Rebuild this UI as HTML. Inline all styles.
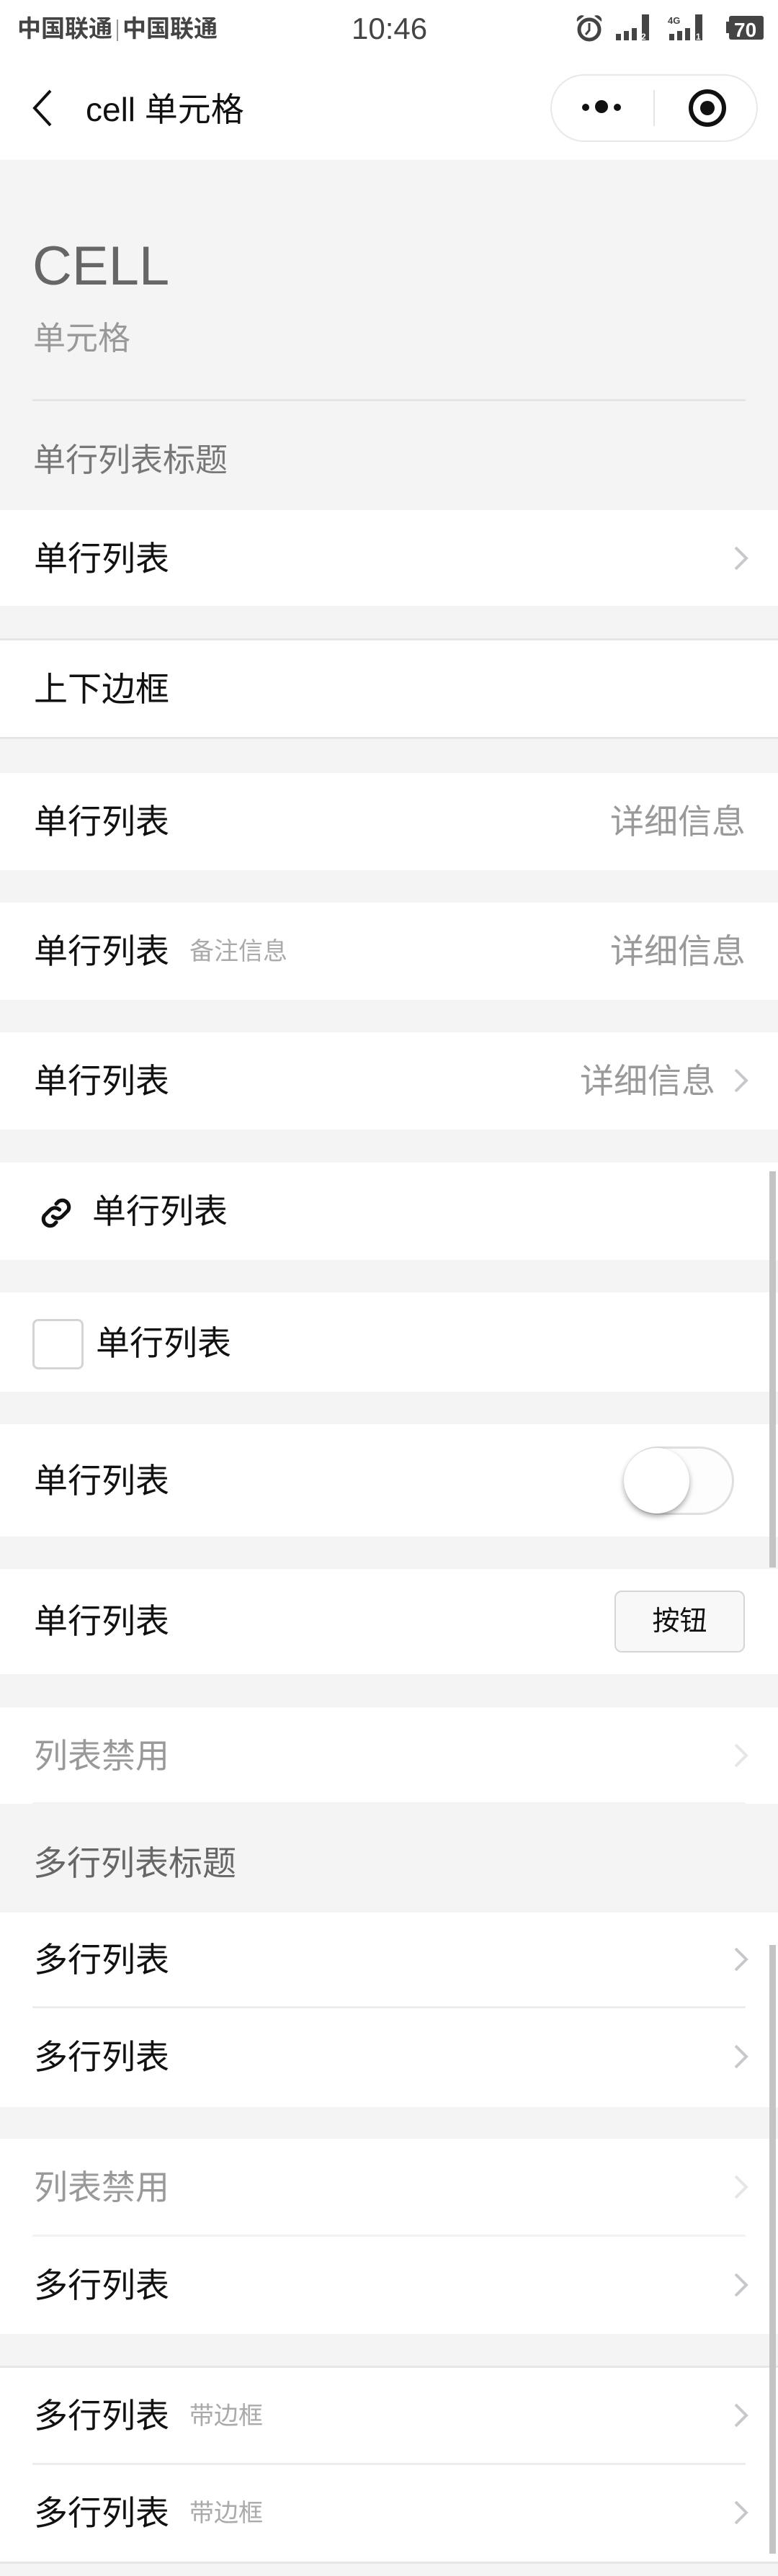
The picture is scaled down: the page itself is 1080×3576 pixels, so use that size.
<!DOCTYPE html>
<html><head><meta charset="utf-8"><style>
*{margin:0;padding:0;box-sizing:border-box}
body{width:1080px;height:3576px;background:#f4f4f4;position:relative;overflow:hidden;font-family:"Liberation Sans","Noto Sans CJK SC",sans-serif;color:#111}
.a{position:absolute}
.w{position:absolute;left:0;width:1080px;background:#fff}
.t{position:absolute;left:47px;font-size:47px;line-height:47px;white-space:nowrap}
.d{position:absolute;right:45px;font-size:47px;line-height:47px;color:#999}
.n{font-size:34px;color:#aaa;margin-left:28px;vertical-align:middle;position:relative;top:-3px}
.sep{position:absolute;left:45px;width:990px;height:3px;background:#ececec}
.bl{position:absolute;left:0;width:1080px;height:3px;background:#e6e6e6}
.ch{position:absolute;left:1016px;width:26px;height:40px}
</style></head><body>
<div class="w" style="top:0;height:222px"></div>
<div class="a" style="left:24px;top:22px;font-size:33px;font-weight:bold;color:#444;line-height:36px">中国联通<span style="display:inline-block;width:2px;height:30px;background:#999;margin:0 6px;vertical-align:middle"></span>中国联通</div>
<div class="a" style="left:488px;top:18px;font-size:42px;color:#444;line-height:44px">10:46</div>
<svg class="a" style="left:798px;top:18px" width="270" height="44" viewBox="798 18 270 44">
<circle cx="818" cy="41" r="14" fill="none" stroke="#444" stroke-width="5"/>
<path d="M818 32v10l-5 6" stroke="#444" stroke-width="3" fill="none"/>
<path d="M801 30a7 7 0 0 1 10-8zM835 30a7 7 0 0 0-10-8z" fill="#444"/>
<rect x="855" y="47" width="7" height="9" fill="#444"/><rect x="866" y="43" width="7" height="13" fill="#444"/><rect x="877" y="39" width="7" height="17" fill="#444"/><rect x="891" y="20" width="10" height="36" fill="#444"/>
<text x="890" y="55" font-size="12" fill="#fff" font-weight="bold" font-family="Liberation Sans">2</text>
<text x="927" y="33" font-size="13" fill="#444" font-weight="bold" font-family="Liberation Sans">4G</text>
<rect x="929" y="47" width="7" height="9" fill="#444"/><rect x="940" y="43" width="7" height="13" fill="#444"/><rect x="951" y="39" width="7" height="17" fill="#444"/><rect x="965" y="20" width="10" height="36" fill="#444"/>
<text x="966" y="55" font-size="12" fill="#fff" font-weight="bold" font-family="Liberation Sans">1</text>
<rect x="1008" y="30" width="5" height="16" fill="#444"/><rect x="1012" y="22" width="48" height="33" rx="3" fill="#444"/>
<text x="1019" y="51" font-size="28" fill="#fff" font-weight="bold" font-family="Liberation Sans">70</text>
</svg>
<svg class="a" style="left:40px;top:122px" width="36" height="56"><path d="M30 4L8 28l22 24" fill="none" stroke="#111" stroke-width="4"/></svg>
<div class="a" style="left:119px;top:128px;font-size:46px;line-height:48px;color:#111">cell 单元格</div>
<div class="a" style="left:764px;top:103px;width:288px;height:94px;border:2px solid #e8e8e8;border-radius:47px;background:#fff"></div>
<div class="a" style="left:907px;top:125px;width:2px;height:50px;background:#e5e5e5"></div>
<div class="a" style="left:808px;top:144px;width:10px;height:10px;border-radius:5px;background:#111"></div>
<div class="a" style="left:826px;top:139px;width:18px;height:18px;border-radius:9px;background:#111"></div>
<div class="a" style="left:852px;top:144px;width:10px;height:10px;border-radius:5px;background:#111"></div>
<div class="a" style="left:956px;top:124px;width:52px;height:52px;border-radius:26px;border:6px solid #111"></div>
<div class="a" style="left:972px;top:140px;width:20px;height:20px;border-radius:10px;background:#111"></div>
<div class="a" style="left:45px;top:330px;font-size:76px;line-height:80px;color:#666">CELL</div>
<div class="a" style="left:46px;top:447px;font-size:45px;line-height:46px;color:#999">单元格</div>
<div class="a" style="left:45px;top:554px;width:990px;height:3px;background:#e5e5e5"></div>
<div class="a" style="left:46px;top:616px;font-size:45px;line-height:46px;color:#777">单行列表标题</div>

<div class="w" style="top:708px;height:133px"></div>
<div class="t" style="top:752px">单行列表</div>
<svg class="ch" style="top:755px"><path d="M5 5l15 15-15 15" fill="none" stroke="#c7c7cc" stroke-width="4"/></svg>

<div class="w" style="top:886px;height:140px"></div>
<div class="bl" style="top:886px"></div><div class="bl" style="top:1023px"></div>
<div class="t" style="top:933px">上下边框</div>

<div class="w" style="top:1073px;height:135px"></div>
<div class="t" style="top:1117px">单行列表</div>
<div class="d" style="top:1117px">详细信息</div>

<div class="w" style="top:1253px;height:135px"></div>
<div class="t" style="top:1297px">单行列表<span class="n">备注信息</span></div>
<div class="d" style="top:1297px">详细信息</div>

<div class="w" style="top:1433px;height:135px"></div>
<div class="t" style="top:1477px">单行列表</div>
<div class="d" style="top:1477px;right:87px">详细信息</div>
<svg class="ch" style="top:1480px"><path d="M5 5l15 15-15 15" fill="none" stroke="#c7c7cc" stroke-width="4"/></svg>

<div class="w" style="top:1614px;height:135px"></div>
<svg class="a" style="left:50px;top:1656px" width="56" height="56" viewBox="0 0 24 24"><g fill="none" stroke="#111" stroke-width="2.2" stroke-linecap="round"><path d="M10 14a4 4 0 0 0 5.5 0l3.5-3.5a4 4 0 0 0-5.5-5.5l-1.5 1.5"/><path d="M14 10a4 4 0 0 0-5.5 0L5 13.5a4 4 0 0 0 5.5 5.5l1.5-1.5"/></g></svg>
<div class="t" style="top:1658px;left:128px">单行列表</div>

<div class="w" style="top:1794px;height:138px"></div>
<div class="a" style="left:45px;top:1831px;width:71px;height:70px;border:3px solid #d4d4d4;border-radius:8px"></div>
<div class="t" style="top:1841px;left:133px">单行列表</div>

<div class="w" style="top:1977px;height:156px"></div>
<div class="t" style="top:2032px">单行列表</div>
<div class="a" style="left:866px;top:2008px;width:153px;height:95px;border:3px solid #dfdfdf;border-radius:48px;background:#fdfdfd"></div>
<div class="a" style="left:866px;top:2010px;width:91px;height:91px;border-radius:46px;background:#fff;box-shadow:0 4px 8px rgba(0,0,0,.35)"></div>

<div class="w" style="top:2178px;height:146px"></div>
<div class="t" style="top:2227px">单行列表</div>
<div class="a" style="left:853px;top:2208px;width:181px;height:86px;border:2px solid #d5d5d5;border-radius:10px;background:#f8f8f8;font-size:38px;line-height:82px;text-align:center;color:#111">按钮</div>

<div class="w" style="top:2370px;height:134px"></div>
<div class="t" style="top:2414px;color:#999">列表禁用</div>
<svg class="ch" style="top:2417px"><path d="M5 5l15 15-15 15" fill="none" stroke="#e6e6e6" stroke-width="4"/></svg>
<div class="a" style="left:45px;top:2502px;width:990px;height:3px;background:#f2f2f2"></div>

<div class="a" style="left:46px;top:2563px;font-size:47px;line-height:47px;color:#666">多行列表标题</div>

<div class="w" style="top:2655px;height:270px"></div>
<div class="t" style="top:2697px">多行列表</div>
<svg class="ch" style="top:2700px"><path d="M5 5l15 15-15 15" fill="none" stroke="#c7c7cc" stroke-width="4"/></svg>
<div class="sep" style="top:2785px"></div>
<div class="t" style="top:2832px">多行列表</div>
<svg class="ch" style="top:2835px"><path d="M5 5l15 15-15 15" fill="none" stroke="#c7c7cc" stroke-width="4"/></svg>

<div class="w" style="top:2969px;height:271px"></div>
<div class="t" style="top:3013px;color:#999">列表禁用</div>
<svg class="ch" style="top:3016px"><path d="M5 5l15 15-15 15" fill="none" stroke="#e6e6e6" stroke-width="4"/></svg>
<div class="sep" style="top:3102px;background:#f2f2f2"></div>
<div class="t" style="top:3149px">多行列表</div>
<svg class="ch" style="top:3152px"><path d="M5 5l15 15-15 15" fill="none" stroke="#c7c7cc" stroke-width="4"/></svg>

<div class="w" style="top:3285px;height:272px"></div>
<div class="bl" style="top:3284px"></div><div class="bl" style="top:3556px"></div>
<div class="t" style="top:3330px">多行列表<span class="n">带边框</span></div>
<svg class="ch" style="top:3333px"><path d="M5 5l15 15-15 15" fill="none" stroke="#c7c7cc" stroke-width="4"/></svg>
<div class="sep" style="top:3419px"></div>
<div class="t" style="top:3465px">多行列表<span class="n">带边框</span></div>
<svg class="ch" style="top:3468px"><path d="M5 5l15 15-15 15" fill="none" stroke="#c7c7cc" stroke-width="4"/></svg>

<div class="a" style="left:1068px;top:1626px;width:9px;height:550px;background:#c4c4c4"></div>
<div class="a" style="left:1068px;top:2700px;width:9px;height:845px;background:#c4c4c4"></div>
</body></html>
